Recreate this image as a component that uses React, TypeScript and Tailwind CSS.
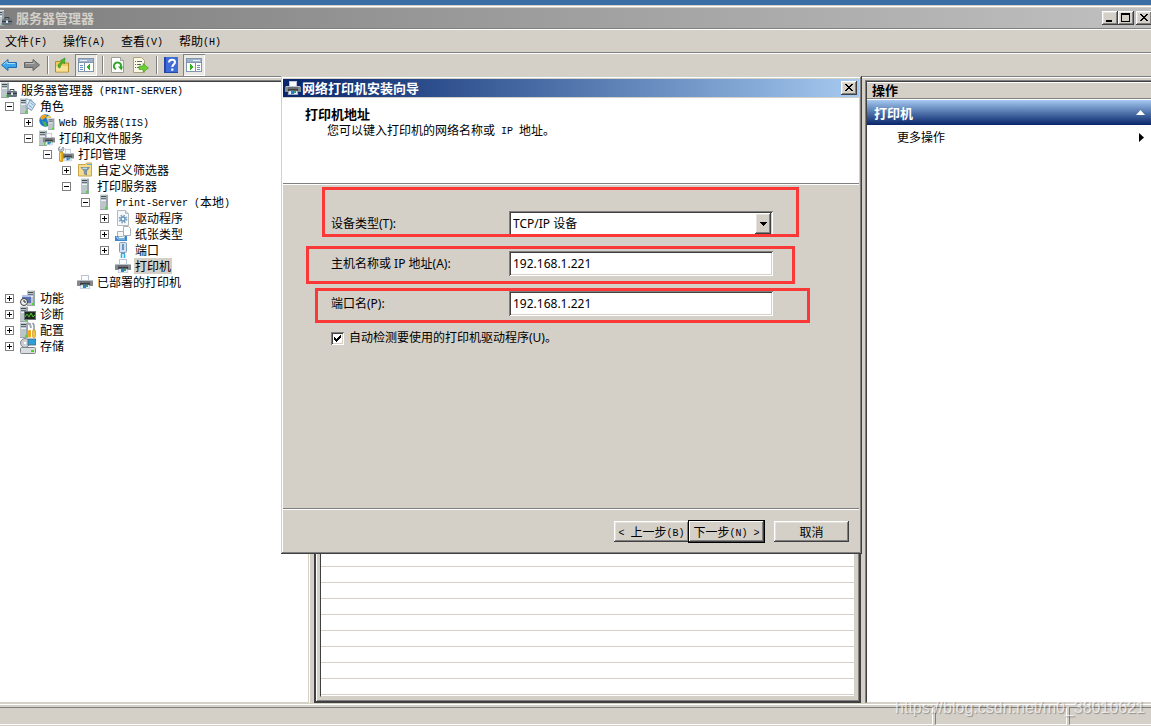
import { useState, type ReactNode } from "react";

const RAISED =
  "bg-[#d4d0c8] shadow-[inset_-1px_-1px_0_#404040,inset_1px_1px_0_#ffffff,inset_-2px_-2px_0_#808080,inset_2px_2px_0_#e4e1da]";
const SUNKEN =
  "bg-white shadow-[inset_1px_1px_0_#808080,inset_-1px_-1px_0_#ffffff,inset_2px_2px_0_#404040,inset_-2px_-2px_0_#d4d0c8]";

/** Latin runs take half the width of a CJK glyph, as in a bitmap console face. */
function Mixed({ text }: { text: string }) {
  return (
    <span className="whitespace-pre">
      {text.split(/([\x20-\x7e]+)/).map((part, i) =>
        i % 2 ? (
          <span key={i} className="align-[1px] font-['Liberation_Mono',monospace] text-[10px] leading-none">
            {part}
          </span>
        ) : (
          part
        ),
      )}
    </span>
  );
}

function Svg({ children }: { children: ReactNode }) {
  return (
    <svg viewBox="0 0 16 16" className="size-4 shrink-0" aria-hidden="true">
      {children}
    </svg>
  );
}

function Tower({ x = 4 }: { x?: number }) {
  return (
    <g transform={`translate(${x} 0)`}>
      <rect x="0" y="0" width="8" height="16" fill="#9aa6ad" />
      <rect x="0" y="0" width="6" height="15" fill="#bcc5ca" />
      <rect x="0" y="0" width="8" height="1" fill="#dfe4e7" />
      <rect x="1" y="2" width="5" height="1" fill="#3f4b52" />
      <rect x="1" y="4" width="5" height="1" fill="#65727a" />
      <rect x="1" y="6" width="5" height="1" fill="#eef1f3" />
      <rect x="5" y="13" width="2" height="2" fill="#4be01e" />
    </g>
  );
}

function PrinterShape() {
  return (
    <g>
      <rect x="4.5" y="1.5" width="7" height="5" fill="#fbfcfd" stroke="#b9c4d0" />
      <path d="M1 6h3v1h8V6h3l1 1v5H0V7z" fill="#85898d" />
      <rect x="1" y="6" width="3" height="1" fill="#b9bdc1" />
      <rect x="12" y="6" width="3" height="1" fill="#b9bdc1" />
      <rect x="3" y="7" width="10" height="2" fill="#6b6f73" />
      <rect x="3" y="9" width="10" height="2" fill="#3c3f42" />
      <path d="M4 11h8l1 3.500H3z" fill="#eaf3fb" stroke="#a9b8c8" strokeWidth=".6" />
      <rect x="6" y="11" width="3" height="3" fill="#2f7fc4" />
      <rect x="9" y="11" width="2" height="2" fill="#2f9a72" />
    </g>
  );
}

const icons = {
  manager: (
    <Svg>
      <Tower x={0} />
      <path d="M9 9V7.500h4V9" fill="none" stroke="#39424a" />
      <rect x="6" y="9" width="10" height="6" rx="1" fill="#66737e" />
      <rect x="6" y="11" width="10" height="1" fill="#303a42" />
      <rect x="10" y="10.500" width="2" height="2.500" fill="#dfe6ea" />
    </Svg>
  ),
  roles: (
    <Svg>
      <Tower x={0} />
      <path d="M6 1l6 1-1 9-5-1z" fill="#eef5fb" stroke="#87a4bd" strokeWidth=".8" />
      <path d="M10 2l5.500 4-4 6.500-5-3.500z" fill="#cfe2f1" stroke="#6688a5" strokeWidth=".8" />
      <path d="M10.500 5l3 2M9 7.500l3 2" stroke="#7ea7c9" />
    </Svg>
  ),
  web: (
    <Svg>
      <circle cx="6.500" cy="6.500" r="6.200" fill="#1f78d1" />
      <path d="M1 4Q3-.5 8 1L6 4 3 6z" fill="#f2a422" />
      <path d="M7 3l4-2 1 4-3 3z" fill="#f7d14a" />
      <path d="M3 7l4 1 1 4-2 1z" fill="#45b649" />
      <g transform="translate(9 4) scale(.8 .75)">
        <Tower x={0} />
      </g>
    </Svg>
  ),
  printServices: (
    <Svg>
      <Tower x={0} />
      <g transform="translate(4 2) scale(.75 .88)">
        <PrinterShape />
      </g>
    </Svg>
  ),
  printManagement: (
    <Svg>
      <g transform="translate(4 2) scale(.75 .88)">
        <PrinterShape />
      </g>
      <path
        d="M2 .5L1 2.500l1 1.500 1.500-.5L5 1l1 1.500-.500 2L4 6H2L.5 4.500V2z"
        fill="#c2c7cb"
        stroke="#7b848b"
        strokeWidth=".7"
      />
      <rect x="1.500" y="6" width="3.500" height="9.500" rx="1" fill="#f0b310" stroke="#a97400" strokeWidth=".6" />
      <path d="M2.500 7v7" stroke="#fbdc7a" strokeWidth=".8" />
    </Svg>
  ),
  filter: (
    <Svg>
      <path d="M1.500 2.500h7l1-1.500h5v13h-13z" fill="#f5dd90" stroke="#c9a448" />
      <path d="M10 2.500h4" stroke="#6aaae0" />
      <path d="M4 5.500h8.500L9.500 9v4l-2.200-1V9z" fill="#7d9ab6" stroke="#55728e" strokeWidth=".6" />
      <path d="M5.500 6.300h4.500" stroke="#d9e8f5" />
    </Svg>
  ),
  server: (
    <Svg>
      <Tower />
    </Svg>
  ),
  driver: (
    <Svg>
      <path d="M2.500.5h8l3 3v12h-11z" fill="#f5f7f9" stroke="#b5bac0" />
      <path d="M10.500.5v3h3" fill="#d5dade" stroke="#b5bac0" />
      <circle cx="8" cy="9" r="3.400" fill="none" stroke="#7ca5c8" strokeWidth="2" strokeDasharray="1.500 1.170" />
      <circle cx="8" cy="9" r="2" fill="none" stroke="#6494bd" strokeWidth="1.400" />
    </Svg>
  ),
  paper: (
    <Svg>
      <path d="M8.500.5h5l2 2v7h-7z" fill="#fff" stroke="#a9b0b7" />
      <path d="M2.500 5.500h6v5h-6z" fill="#f4f6f8" stroke="#a9b0b7" />
      <path d="M0 10h3l1 2h5l1-2h2v5H0z" fill="#3c87cf" />
      <path d="M1 11h1l1 2h7" stroke="#a8d2f5" fill="none" />
    </Svg>
  ),
  port: (
    <Svg>
      <rect x="4.500" y=".5" width="7" height="10" rx="1" fill="#cfe0f2" stroke="#7f9cbb" />
      <rect x="7" y="2" width="2" height="6" fill="#6f93bd" />
      <path d="M6 11h4v1H6z" fill="#6c8db0" />
      <path d="M6.500 12v4M9.500 12v4" stroke="#22b5e8" strokeWidth="1.600" />
    </Svg>
  ),
  printer: (
    <Svg>
      <PrinterShape />
    </Svg>
  ),
  features: (
    <Svg>
      <Tower x={7} />
      <rect x="2" y="5" width="9" height="8" fill="#5b6fb5" />
      <rect x="2" y="5" width="9" height="2" fill="#b5c1e6" />
      <circle cx="4" cy="12" r="3.500" fill="#f0f0f0" stroke="#3b3b3b" />
      <path d="M4 10v2h2" stroke="#222" fill="none" />
    </Svg>
  ),
  diagnostics: (
    <Svg>
      <Tower x={0} />
      <rect x="4.500" y="5.500" width="11" height="8" fill="#1c2a1b" stroke="#6e777d" />
      <path d="M5 11l2-3 2 3 2-4 2 4 2-2" stroke="#55c32f" fill="none" />
    </Svg>
  ),
  configuration: (
    <Svg>
      <Tower x={0} />
      <path d="M7 1l3 1 1 4" stroke="#a1a8ad" strokeWidth="2" fill="none" />
      <path d="M12.500 1L14 3v5" stroke="#8d969c" strokeWidth="1.500" fill="none" />
      <rect x="8" y="8" width="3" height="7.500" rx="1" fill="#f0a818" />
      <rect x="12.500" y="8" width="3" height="7.500" rx="1" fill="#f5c33a" stroke="#b67c00" strokeWidth=".5" />
    </Svg>
  ),
  storage: (
    <Svg>
      <circle cx="5" cy="5" r="4.500" fill="#c9cfd4" stroke="#7d868c" />
      <circle cx="5" cy="5" r="1.200" fill="#fff" />
      <rect x="8" y="1" width="8" height="6" fill="#2e9fd6" stroke="#4a6474" strokeWidth=".8" />
      <rect x=".5" y="9.500" width="15" height="6" rx="1" fill="#d9dde0" stroke="#7d868c" />
      <rect x="11" y="12" width="3" height="2" fill="#4bd21e" />
    </Svg>
  ),
};

type Node = { level: number; icon: keyof typeof icons; text: string; open?: boolean; selected?: boolean };

const nodes: Node[] = [
  { level: 1, icon: "roles", text: "角色", open: true },
  { level: 2, icon: "web", text: "Web 服务器(IIS)", open: false },
  { level: 2, icon: "printServices", text: "打印和文件服务", open: true },
  { level: 3, icon: "printManagement", text: "打印管理", open: true },
  { level: 4, icon: "filter", text: "自定义筛选器", open: false },
  { level: 4, icon: "server", text: "打印服务器", open: true },
  { level: 5, icon: "server", text: "Print-Server (本地)", open: true },
  { level: 6, icon: "driver", text: "驱动程序", open: false },
  { level: 6, icon: "paper", text: "纸张类型", open: false },
  { level: 6, icon: "port", text: "端口", open: false },
  { level: 6, icon: "printer", text: "打印机", selected: true },
  { level: 4, icon: "printer", text: "已部署的打印机" },
  { level: 1, icon: "features", text: "功能", open: false },
  { level: 1, icon: "diagnostics", text: "诊断", open: false },
  { level: 1, icon: "configuration", text: "配置", open: false },
  { level: 1, icon: "storage", text: "存储", open: false },
];

const indent = ["", "pl-[5px]", "pl-6", "pl-[43px]", "pl-[62px]", "pl-[81px]", "pl-[100px]"];

function Expander({ open, name }: { open: boolean; name: string }) {
  return (
    <button type="button" aria-label={name} aria-expanded={open} className="size-[9px] shrink-0">
      <svg viewBox="0 0 9 9" className="size-[9px]" shapeRendering="crispEdges" aria-hidden="true">
        <rect x=".5" y=".5" width="8" height="8" fill="#fff" stroke="#808080" />
        <path d={open ? "M2 4.500h5" : "M2 4.500h5M4.500 2v5"} stroke="#000" />
      </svg>
    </button>
  );
}

function Tree() {
  return (
    <nav aria-label="控制台树" className="w-[310px] shrink-0 border-t border-r border-t-[#808080] border-r-white bg-white">
      <ul className="h-full border-t border-r border-b border-t-[#404040] border-r-[#d4d0c8] border-b-[#d4d0c8]">
        <li className="flex h-4 items-center gap-1 pl-px leading-4">
          {icons.manager}
          <Mixed text="服务器管理器 (PRINT-SERVER)" />
        </li>
        {nodes.map((n) => (
          <li key={n.text} className={`flex h-4 items-center leading-4 ${indent[n.level]}`}>
            {n.open === undefined ? <span className="w-[9px]" /> : <Expander open={n.open} name={n.text} />}
            <span className="ml-1.5">{icons[n.icon]}</span>
            <span className={`ml-[3px] h-4 px-px ${n.selected ? "bg-[#d4d0c8]" : ""}`}>
              <Mixed text={n.text} />
            </span>
          </li>
        ))}
      </ul>
    </nav>
  );
}

function CaptionButton({ label, children }: { label: string; children: ReactNode }) {
  return (
    <button type="button" aria-label={label} className={`h-3.5 w-4 shrink-0 ${RAISED}`}>
      <svg viewBox="0 0 16 14" className="h-3.5 w-4" shapeRendering="crispEdges" aria-hidden="true">
        {children}
      </svg>
    </button>
  );
}

const closeGlyph = (
  <path
    d="M4 3h2v1h1v1h2V4h1V3h2v1h-1v1h-1v1H9v1h1v1h1v1h1v1h-2V9H9V8H7v1H6v1H4V9h1V8h1V7h1V6H6V5H5V4H4z"
    fill="#000"
  />
);

function ToolButton({ label, pressed, children }: { label: string; pressed?: boolean; children: ReactNode }) {
  return (
    <button
      type="button"
      aria-label={label}
      aria-pressed={pressed}
      className={
        pressed
          ? "flex size-[22px] items-center justify-center bg-[#ebe9e4] shadow-[inset_1px_1px_0_#808080,inset_-1px_-1px_0_#ffffff]"
          : "flex h-[22px] w-4 items-center justify-center"
      }
    >
      {children}
    </button>
  );
}

function Divider() {
  return <span className="h-[18px] w-0.5 border-r border-l border-r-white border-l-[#808080]" />;
}

function PaneIcon({ flip }: { flip?: boolean }) {
  return (
    <Svg>
      <g shapeRendering="crispEdges" transform={flip ? "matrix(-1 0 0 1 16 0)" : undefined}>
        <rect x=".5" y="1.500" width="15" height="13" fill="#fff" stroke="#8195ad" />
        <rect x="1" y="2" width="14" height="3" fill="#9db2cc" />
        <path d="M2 3.500h7" stroke="#e9f0f8" />
        <path d="M1 5.500h14M6.500 6v8" stroke="#8195ad" />
        <path d="M2 8.500h3M2 10.500h3M2 12.500h3" stroke="#6a90be" />
        <path d="M12 7v6L8.500 10z" fill="#2fb51d" />
      </g>
    </Svg>
  );
}

function Toolbar() {
  return (
    <div
      role="toolbar"
      className="flex h-6 items-center border-t border-[#808080] pl-px shadow-[inset_0_1px_0_#ffffff]"
    >
      <div className="flex gap-[7px]">
        <ToolButton label="后退">
          <Svg>
            <path d="M.5 8L7 2.500V5.500h8.500v5H7v3z" fill="#3ba4ea" stroke="#1f6fae" />
            <path d="M2.500 7.500L6 4.500v2h8" fill="none" stroke="#a6dcfb" />
          </Svg>
        </ToolButton>
        <ToolButton label="前进">
          <Svg>
            <path d="M15.500 8L9 2.500V5.500H.5v5H9v3z" fill="#8b8b8b" stroke="#626262" />
            <path d="M1.500 6.500H10v-2" fill="none" stroke="#bcbcbc" />
          </Svg>
        </ToolButton>
      </div>
      <div className="ml-[7px] flex items-center gap-[5px]">
        <Divider />
        <ToolButton label="上一级">
          <Svg>
            <path d="M1.500 4.500h5l1 1.500h7v9h-13z" fill="#efc964" stroke="#b58a2a" />
            <path d="M2 9h12v5.500H2z" fill="#f8e196" />
            <path
              d="M4 10c0-3 1.500-4 4-5L6.500 3.500 11 1l-.5 5.500L9 5.500C7.500 7 6.500 8 6 11z"
              fill="#43bd2c"
              stroke="#2b8a1b"
              strokeWidth=".6"
            />
          </Svg>
        </ToolButton>
        <ToolButton label="显示/隐藏控制台树" pressed>
          <PaneIcon />
        </ToolButton>
        <Divider />
      </div>
      <div className="ml-1.5 flex items-center gap-[7px]">
        <ToolButton label="刷新">
          <Svg>
            <path d="M1.500.5h9l3 3v12h-12z" fill="#fff" stroke="#9b9f94" />
            <path d="M10.500.5v3h3" fill="#dfe0da" stroke="#9b9f94" />
            <path d="M6 12.200A3.500 3.500 0 1 1 10.800 10" fill="none" stroke="#2fa52a" strokeWidth="1.900" />
            <path d="M8 9.500h5l-1.500 4z" fill="#2fa52a" />
          </Svg>
        </ToolButton>
        <ToolButton label="导出列表">
          <Svg>
            <path d="M.5.5h8l3 3v12H.5z" fill="#fbf8e6" stroke="#a9a27c" />
            <path d="M2 4.500h1M4 4.500h5M2 7.500h1M4 7.500h4M2 10.500h1M4 10.500h3" stroke="#56686f" />
            <path d="M6 9h4V6.500l5.500 4.500L10 15v-2.500H6z" fill="#6bd132" stroke="#3d9b1a" strokeWidth=".6" />
          </Svg>
        </ToolButton>
        <Divider />
      </div>
      <div className="ml-[5px] flex items-center gap-1">
        <ToolButton label="帮助">
          <Svg>
            <rect x="1" y="0" width="14" height="16" fill="#2448a8" />
            <rect x="3" y="0" width="12" height="15" fill="#3f6bd6" />
            <path d="M6 5.500C6 1.500 12 2 12 5c0 2.500-2.700 2.500-2.700 5" fill="none" stroke="#fff" strokeWidth="2" />
            <rect x="8.200" y="11.500" width="2.200" height="2.200" fill="#fff" />
          </Svg>
        </ToolButton>
        <ToolButton label="显示/隐藏操作窗格" pressed>
          <PaneIcon flip />
        </ToolButton>
      </div>
    </div>
  );
}

function ActionsPane() {
  return (
    <aside className="w-[286px] shrink-0 border-t border-l border-[#808080] bg-white">
      <div className="h-full border-t border-b border-l border-[#404040] border-b-[#d4d0c8]">
        <h2 className="h-[17px] border-b border-[#808080] bg-[#d4d0c8] pl-[5px] text-[13px] leading-4 font-bold shadow-[inset_0_1px_0_#ffffff]">
          操作
        </h2>
        <button
          type="button"
          className="mt-px flex h-[25px] w-full items-center justify-between bg-linear-to-b from-[#a6caf0] to-[#0a246a] pr-1.5 pl-[7px] text-[13px] font-bold text-white"
        >
          打印机
          <svg viewBox="0 0 9 5" className="h-[5px] w-[9px]" aria-hidden="true">
            <path d="M4.500 0L9 5H0z" fill="#fff" />
          </svg>
        </button>
        <button type="button" className="flex h-6 w-full items-center justify-between pr-[7px] pl-[30px]">
          更多操作
          <svg viewBox="0 0 5 9" className="h-[9px] w-[5px]" aria-hidden="true">
            <path d="M0 0l5 4.500L0 9z" fill="#000" />
          </svg>
        </button>
      </div>
    </aside>
  );
}

const FIELD = `h-[25px] w-full rounded-none px-1 leading-[25px] outline-none ${SUNKEN}`;
const MARK = "pointer-events-none absolute border-3 border-[#fb3838]";

function Wizard() {
  const [host, setHost] = useState("192.168.1.221");
  const [port, setPort] = useState("192.168.1.221");
  return (
    <section
      role="dialog"
      aria-label="网络打印机安装向导"
      className="absolute top-[76px] left-[281px] flex h-[478px] w-[581px] flex-col bg-[#d4d0c8] pt-[3px] pr-[3px] pb-0.5 pl-0.5 shadow-[inset_-1px_-1px_0_#404040,inset_1px_1px_0_#d4d0c8,inset_-2px_-2px_0_#808080,inset_2px_2px_0_#ffffff]"
    >
      <div className="flex h-[18px] items-center bg-linear-to-r from-[#0a246a] to-[#a6caf0] pr-0.5 pl-0.5 text-white">
        {icons.printer}
        <h1 className="ml-px flex-1 text-[13px] leading-[18px] font-bold">网络打印机安装向导</h1>
        <CaptionButton label="关闭">{closeGlyph}</CaptionButton>
      </div>
      <header className="mt-px h-[86px] border-b border-[#808080] bg-white pt-2 pl-[22px] leading-4">
        <h2 className="text-[13px] font-bold">打印机地址</h2>
        <p className="pl-[22px]">
          <Mixed text="您可以键入打印机的网络名称或 IP 地址。" />
        </p>
      </header>
      <form className="flex-1 border-t border-white pt-[26px] pl-12 font-['Noto_Sans','Noto_Sans_CJK_SC',sans-serif]">
        <div className="grid grid-cols-[178px_264px] items-center gap-y-[15px]">
          <label htmlFor="device">设备类型(T):</label>
          <div className="relative">
            <select id="device" className={`appearance-none ${FIELD}`}>
              <option>TCP/IP 设备</option>
            </select>
            <span
              className={`pointer-events-none absolute top-0.5 right-0.5 flex h-[21px] w-4 items-center justify-center ${RAISED}`}
            >
              <svg viewBox="0 0 7 4" className="h-1 w-[7px]" shapeRendering="crispEdges" aria-hidden="true">
                <path d="M0 0h7v1H6v1H5v1H4v1H3V3H2V2H1V1H0z" fill="#000" />
              </svg>
            </span>
          </div>
          <label htmlFor="host">主机名称或 IP 地址(A):</label>
          <input id="host" className={FIELD} value={host} onChange={(e) => setHost(e.target.value)} />
          <label htmlFor="port">端口名(P):</label>
          <input id="port" className={FIELD} value={port} onChange={(e) => setPort(e.target.value)} />
        </div>
        <label className="mt-[13px] flex items-center gap-[5px] leading-[18px]">
          <span className="relative flex">
            <input type="checkbox" defaultChecked className={`peer size-[13px] appearance-none ${SUNKEN}`} />
            <svg
              viewBox="0 0 13 13"
              className="pointer-events-none absolute inset-0 hidden size-[13px] peer-checked:block"
              shapeRendering="crispEdges"
              aria-hidden="true"
            >
              <path d="M3 5h1v1h1v1h1V6h1V5h1V4h1V3h1v3H9v1H8v1H7v1H6v1H5V9H4V8H3z" fill="#000" />
            </svg>
          </span>
          自动检测要使用的打印机驱动程序(U)。
        </label>
      </form>
      <footer className="border-t border-[#808080]">
        <div className="flex h-[43px] items-start justify-end border-t border-white pt-[11px] pr-2.5">
          <button type="button" className={`h-[21px] w-[75px] ${RAISED}`}>
            <Mixed text="< 上一步(B)" />
          </button>
          <button
            type="button"
            className="h-[21px] w-[75px] bg-[#d4d0c8] shadow-[0_0_0_1px_#000000,inset_-1px_-1px_0_#404040,inset_1px_1px_0_#ffffff,inset_-2px_-2px_0_#808080]"
          >
            <Mixed text="下一步(N) >" />
          </button>
          <button type="button" className={`ml-2.5 h-[21px] w-[75px] ${RAISED}`}>
            取消
          </button>
        </div>
      </footer>
      <div className={`${MARK} top-[111px] left-[41px] h-[50px] w-[477px]`} />
      <div className={`${MARK} top-[170px] left-[25px] h-[38px] w-[489px]`} />
      <div className={`${MARK} top-[212px] left-[34px] h-[35px] w-[495px]`} />
    </section>
  );
}

export default function App() {
  return (
    <div className="relative flex min-h-screen flex-col overflow-hidden bg-[#d4d0c8] font-['Noto_Sans_CJK_SC',sans-serif] text-[12px] text-black">
      <div className="h-[5px] bg-[#3a6ea5]" />
      <div className="mt-px border-t border-white pt-px">
        <div className="flex h-5 items-center bg-linear-to-r from-[#808080] to-[#c0c0c0]">
          <span className="-ml-1 flex">{icons.manager}</span>
          <span className="ml-1 flex-1 text-[13px] leading-5 font-bold text-[#d4d0c8]">服务器管理器</span>
          <CaptionButton label="最小化">
            <rect x="4" y="9" width="6" height="2" fill="#000" />
          </CaptionButton>
          <CaptionButton label="最大化">
            <path d="M3 2h9v9H3zM4 4v6h7V4z" fill="#000" fillRule="evenodd" />
          </CaptionButton>
          <span className="ml-0.5 -mr-px flex">
            <CaptionButton label="关闭">{closeGlyph}</CaptionButton>
          </span>
        </div>
      </div>
      <div
        role="menubar"
        className="flex h-6 items-center gap-4 border-t border-[#808080] pl-[5px] shadow-[inset_0_1px_0_#ffffff]"
      >
        {["文件(F)", "操作(A)", "查看(V)", "帮助(H)"].map((item) => (
          <button key={item} type="button" role="menuitem">
            <Mixed text={item} />
          </button>
        ))}
      </div>
      <Toolbar />
      <div className="flex flex-1 gap-1 border-t border-[#808080] pt-[3px] shadow-[inset_0_1px_0_#ffffff]">
        <Tree />
        <main className="flex-1 border-2 border-[#404040] bg-[#d4d0c8] p-1 shadow-[inset_1px_1px_0_#ffffff,inset_-1px_-1px_0_#808080]">
          <div className="h-full border-t border-r border-b border-l border-[#d4d0c8] border-l-[#404040] bg-white bg-[repeating-linear-gradient(to_bottom,transparent_0px,transparent_15px,#d4d0c8_15px,#d4d0c8_16px)]" />
        </main>
        <ActionsPane />
      </div>
      <footer className="mt-px flex h-[22px] gap-0.5 border-t border-white pt-0.5 pb-px">
        <span className="flex-1 border-t border-r border-b border-[#808080] border-r-white border-b-white" />
        <span className="w-[132px] border border-[#808080] border-r-white border-b-white" />
        <span className="w-[82px] border-t border-b border-l border-[#808080] border-b-white" />
      </footer>
      <Wizard />
      <p className="pointer-events-none absolute right-1.5 bottom-2 font-['Liberation_Sans',sans-serif] text-[16px] leading-5 text-white/70 [text-shadow:1px_1px_1px_rgba(0,0,0,0.3)]">
        https://blog.csdn.net/m0_38010621
      </p>
    </div>
  );
}
